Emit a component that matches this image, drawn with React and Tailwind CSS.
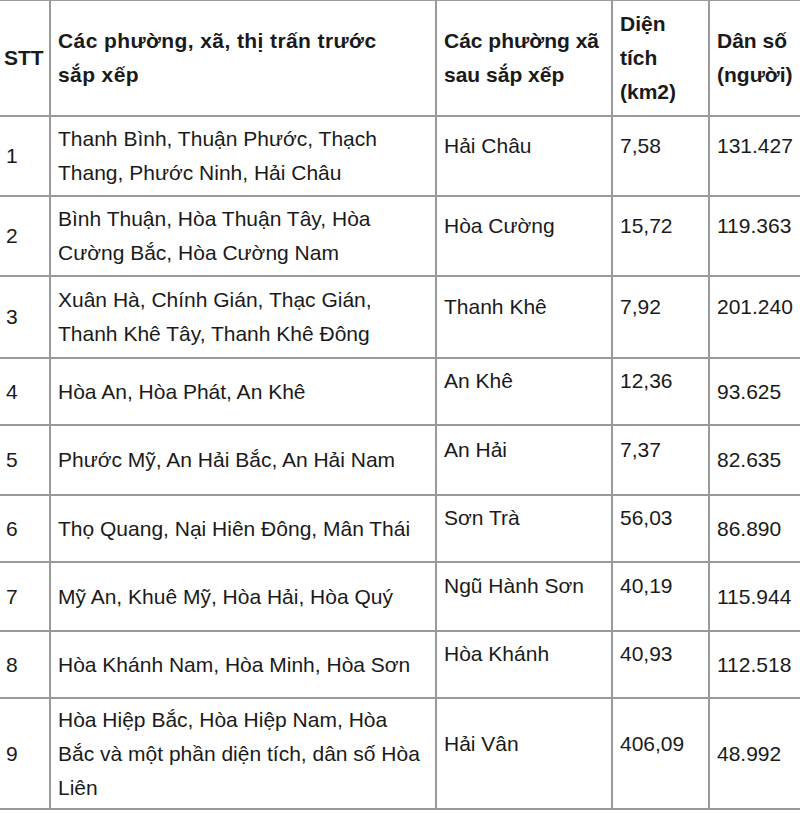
import React from "react";

const rows = [
  { stt: "1", before: "Thanh Bình, Thuận Phước, Thạch Thang, Phước Ninh, Hải Châu", after: "Hải Châu", area: "7,58", pop: "131.427", popUp: true, h: "h-[80px]" },
  { stt: "2", before: "Bình Thuận, Hòa Thuận Tây, Hòa Cường Bắc, Hòa Cường Nam", after: "Hòa Cường", area: "15,72", pop: "119.363", popUp: true, h: "h-[80px]" },
  { stt: "3", before: "Xuân Hà, Chính Gián, Thạc Gián, Thanh Khê Tây, Thanh Khê Đông", after: "Thanh Khê", area: "7,92", pop: "201.240", popUp: true, h: "h-[82px]" },
  { stt: "4", before: "Hòa An, Hòa Phát, An Khê", after: "An Khê", area: "12,36", pop: "93.625", h: "h-[67px]" },
  { stt: "5", before: "Phước Mỹ, An Hải Bắc, An Hải Nam", after: "An Hải", area: "7,37", pop: "82.635", h: "h-[70px]" },
  { stt: "6", before: "Thọ Quang, Nại Hiên Đông, Mân Thái", after: "Sơn Trà", area: "56,03", pop: "86.890", h: "h-[67px]" },
  { stt: "7", before: "Mỹ An, Khuê Mỹ, Hòa Hải, Hòa Quý", after: "Ngũ Hành Sơn", area: "40,19", pop: "115.944", h: "h-[69px]" },
  { stt: "8", before: "Hòa Khánh Nam, Hòa Minh, Hòa Sơn", after: "Hòa Khánh", area: "40,93", pop: "112.518", h: "h-[67px]" },
  { stt: "9", before: "Hòa Hiệp Bắc, Hòa Hiệp Nam, Hòa Bắc và một phần diện tích, dân số Hòa Liên", after: "Hải Vân", area: "406,09", pop: "48.992", h: "h-[111px]", last: true },
];

const cell = "border-2 border-[#9a9a9a] px-[7px] align-middle";

function Cell({ raised, row, children }) {
  let pad = "py-[5px]";
  if (row.last) pad = raised ? "pt-[3px] pb-[22px]" : "py-[3px]";
  else if (raised) pad = "pt-[5px] pb-[26px]";
  return <td className={cell + " " + pad}>{children}</td>;
}

export default function App() {
  return (
    <div className="w-[800px] h-[813px] overflow-hidden bg-white">
      <table
        className="table-fixed border-collapse ml-[-3px] mt-[-1px] w-[806px] text-[21px] leading-[34px] text-[#1a1a1a]"
        style={{ fontFamily: '"Liberation Sans", Arial, sans-serif' }}
      >
        <colgroup>
          <col className="w-[52px]" />
          <col className="w-[386px]" />
          <col className="w-[176px]" />
          <col className="w-[97px]" />
          <col className="w-[95px]" />
        </colgroup>
        <thead>
          <tr className="font-bold text-left">
            <th className={cell + " py-[6px] pl-[5px] font-bold"}>STT</th>
            <th className={cell + " py-[6px] font-bold tracking-[0.4px]"}>
              Các phường, xã, thị trấn trước <span className="whitespace-nowrap">sắp xếp</span>
            </th>
            <th className={cell + " py-[6px] font-bold"}>Các phường xã sau sắp xếp</th>
            <th className={cell + " py-[6px] font-bold"}>Diện tích (km2)</th>
            <th className={cell + " py-[6px] font-bold"}>Dân số (người)</th>
          </tr>
        </thead>
        <tbody>
          {rows.map((r) => (
            <tr key={r.stt} className={r.h}>
              <Cell row={r}>{r.stt}</Cell>
              <Cell row={r}>{r.before}</Cell>
              <Cell row={r} raised>{r.after}</Cell>
              <Cell row={r} raised>{r.area}</Cell>
              <Cell row={r} raised={r.popUp}>{r.pop}</Cell>
            </tr>
          ))}
        </tbody>
      </table>
    </div>
  );
}
